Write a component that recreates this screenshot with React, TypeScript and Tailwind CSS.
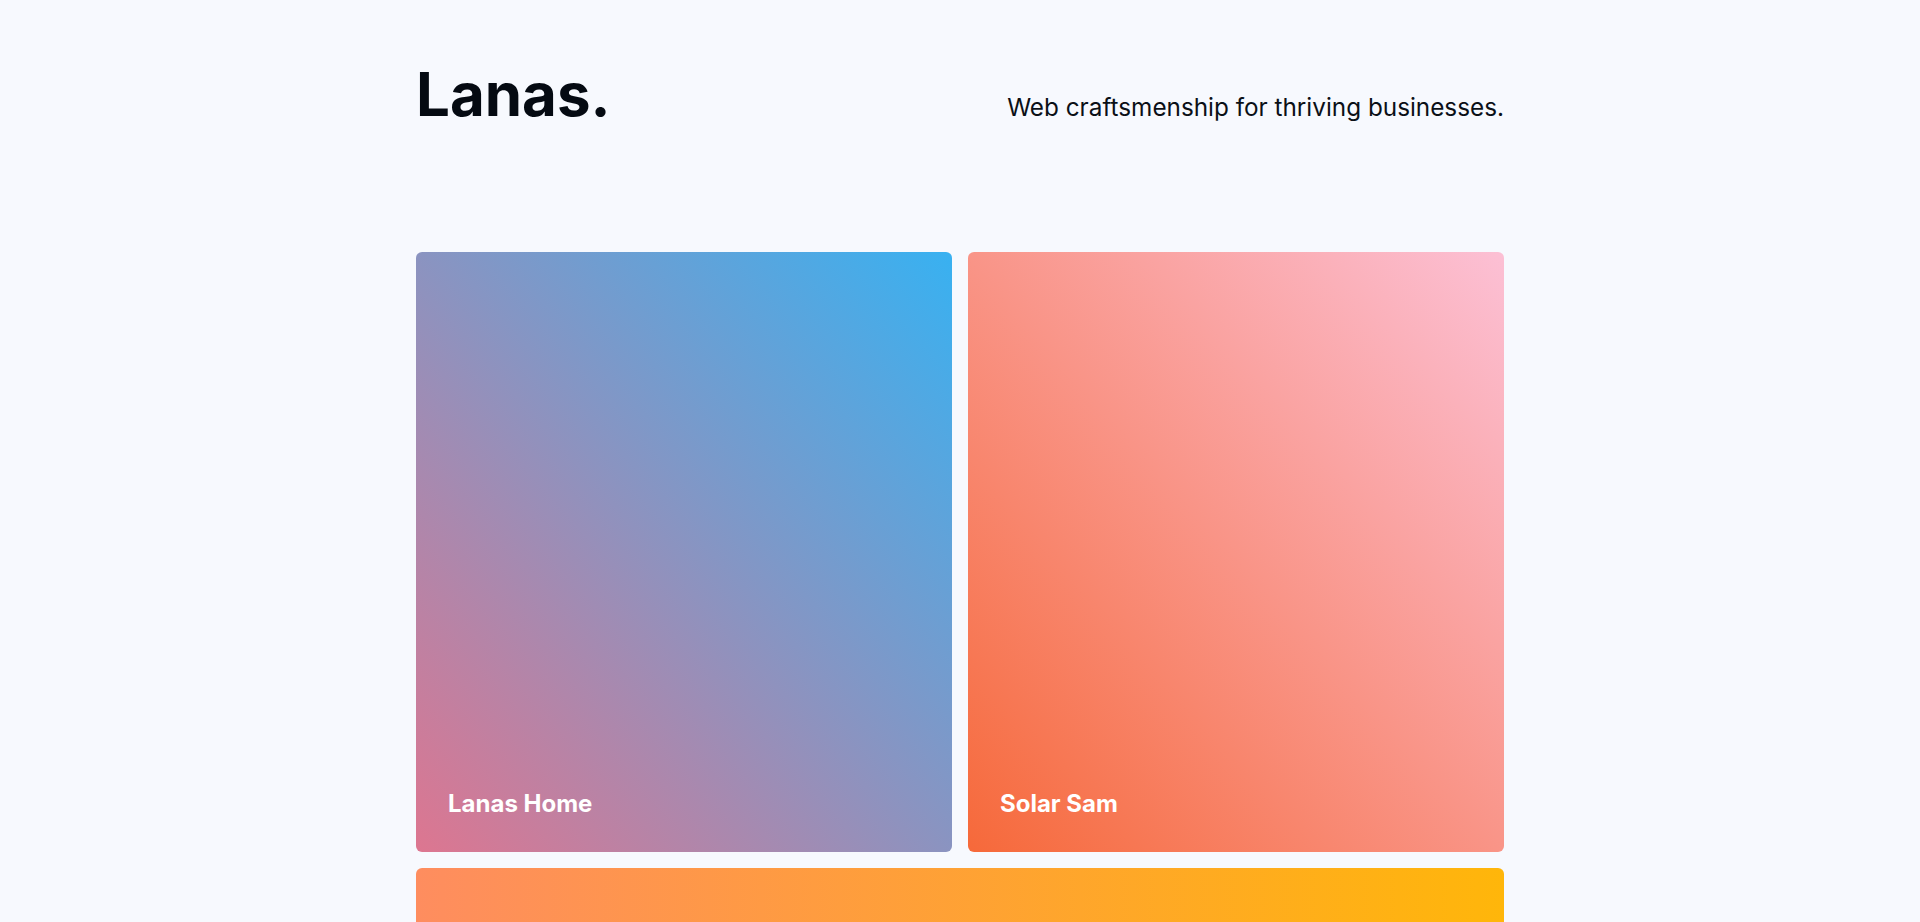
const projects = [
  { name: "Lanas Home", gradient: "bg-[linear-gradient(to_top_right,#dd7690,#38b1f1)]" },
  { name: "Solar Sam", gradient: "bg-[linear-gradient(to_top_right,#f6693a,#fcc0d5)]" },
];

const ProjectCard = ({ name, gradient }: { name: string; gradient: string }) => (
  <div className={`flex h-[600px] items-end rounded-md p-8 ${gradient}`}>
    <h3 className="text-2xl font-bold text-white">{name}</h3>
  </div>
);

export default function App() {
  return (
    <div
      className="min-h-screen bg-[#f7f9fe] text-[#050a12]"
      style={{ fontFamily: "Inter, 'Noto Sans', sans-serif" }}
    >
      <div className="mx-auto w-[1088px] pt-16">
        {/* Header */}
        <header className="flex items-baseline justify-between">
          <h1 className="text-6xl leading-none font-bold">Lanas.</h1>
          <p className="text-[24.3px] leading-8 text-[#0b1017]">Web craftsmenship for thriving businesses.</p>
        </header>

        {/* Work */}
        <section className="mt-[128px] flex flex-col gap-4 pb-16">
          <div className="grid grid-cols-2 gap-4">
            {projects.map((p) => (
              <ProjectCard key={p.name} {...p} />
            ))}
          </div>
          <ProjectCard name="Sunny Days" gradient="bg-[linear-gradient(to_right,#fe8d5f,#ffb60a)]" />
        </section>
      </div>
    </div>
  );
}
